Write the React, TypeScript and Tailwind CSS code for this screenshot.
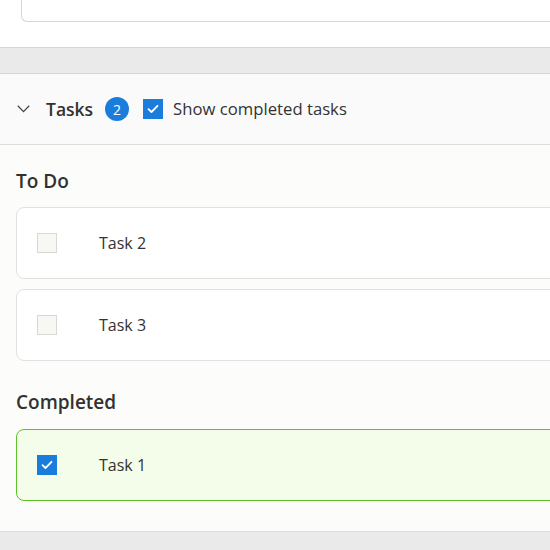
import React from "react";

function Check({ checked }: { checked: boolean }) {
  return checked ? (
    <div className="w-5 h-5 bg-[#1b7ddb] flex items-center justify-center shrink-0">
      <svg width="12" height="10" viewBox="0 0 12 10" fill="none">
        <path d="M1.5 5.2 L4.5 8 L10.5 1.8" stroke="white" strokeWidth="1.8" strokeLinecap="round" strokeLinejoin="round" />
      </svg>
    </div>
  ) : (
    <div className="w-5 h-5 bg-[#f7f7f4] border border-[#d9d9d4] shrink-0" />
  );
}

function TaskCard({ name, done }: { name: string; done: boolean }) {
  return (
    <div
      className={
        "h-[72px] ml-4 -mr-4 rounded-lg border flex items-center pl-5 " +
        (done ? "bg-[#f3fdea] border-[#5dc12a]" : "bg-white border-[#e1e1e1]")
      }
    >
      <Check checked={done} />
      <span className="ml-[42px] text-[16px] text-[#333]">{name}</span>
    </div>
  );
}

export default function App() {
  return (
    <div className="w-[550px] h-[550px] overflow-hidden bg-[#eaeaea] font-['Open_Sans',sans-serif] text-[#323130]">
      <div className="bg-white h-[48px] border-b border-[#d6d6d6] pl-[21px] flex flex-col overflow-hidden">
        <div className="h-[22px] shrink-0 border border-t-0 border-[#d6d6d6] rounded-b-md bg-white -mr-4" />
      </div>
      <div className="h-[26px] border-b border-[#d6d6d6] bg-[#eaeaea]" />
      <div className="h-[71px] bg-[#fafafa] border-b border-[#dedede] flex items-center pl-[17px]">
        <svg width="13" height="8" viewBox="0 0 13 8" fill="none">
          <path d="M0.8 0.8 L6.5 6.6 L12.2 0.8" stroke="#444" strokeWidth="1.3" />
        </svg>
        <span className="ml-[16px] text-[17.5px] font-semibold text-[#323130]">Tasks</span>
        <span className="ml-[12px] w-6 h-6 rounded-full bg-[#1b7ddb] text-white text-[14px] flex items-center justify-center">2</span>
        <div className="ml-[14px]">
          <Check checked={true} />
        </div>
        <span className="ml-[10px] text-[16.7px] text-[#333]">Show completed tasks</span>
      </div>
      <div className="bg-[#fcfcfa] border-b border-[#dcdcdc] pt-[24px] pb-[30px]">
        <div className="pl-4 text-[19px] font-semibold leading-[24px] text-[#323130]">To Do</div>
        <div className="mt-[14px] flex flex-col gap-[10px]">
          <TaskCard name="Task 2" done={false} />
          <TaskCard name="Task 3" done={false} />
        </div>
        <div className="pl-4 mt-[29px] text-[19px] font-semibold leading-[24px] text-[#323130]">Completed</div>
        <div className="mt-[15px]">
          <TaskCard name="Task 1" done={true} />
        </div>
      </div>
    </div>
  );
}
